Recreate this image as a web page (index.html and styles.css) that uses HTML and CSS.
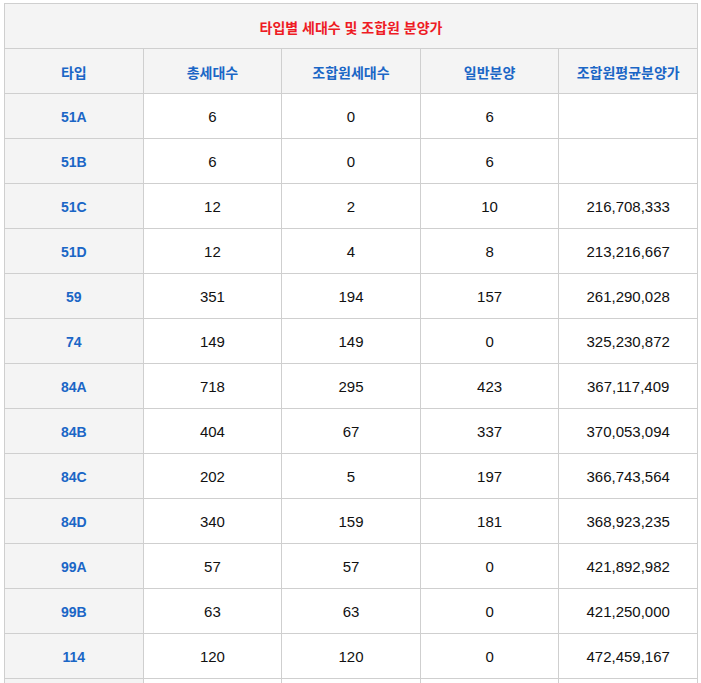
FILE: index.html
```html
<!DOCTYPE html>
<html lang="ko">
<head>
<meta charset="utf-8">
<link rel="stylesheet" href="styles.css">
</head>
<body>
<table class="tbl">
  <thead>
    <tr><th class="title" colspan="5">타입별 세대수 및 조합원 분양가</th></tr>
    <tr class="head">
      <th>타입</th><th>총세대수</th><th>조합원세대수</th><th>일반분양</th><th>조합원평균분양가</th>
    </tr>
  </thead>
  <tbody>
    <tr><th>51A</th><td>6</td><td>0</td><td>6</td><td></td></tr>
    <tr><th>51B</th><td>6</td><td>0</td><td>6</td><td></td></tr>
    <tr><th>51C</th><td>12</td><td>2</td><td>10</td><td>216,708,333</td></tr>
    <tr><th>51D</th><td>12</td><td>4</td><td>8</td><td>213,216,667</td></tr>
    <tr><th>59</th><td>351</td><td>194</td><td>157</td><td>261,290,028</td></tr>
    <tr><th>74</th><td>149</td><td>149</td><td>0</td><td>325,230,872</td></tr>
    <tr><th>84A</th><td>718</td><td>295</td><td>423</td><td>367,117,409</td></tr>
    <tr><th>84B</th><td>404</td><td>67</td><td>337</td><td>370,053,094</td></tr>
    <tr><th>84C</th><td>202</td><td>5</td><td>197</td><td>366,743,564</td></tr>
    <tr><th>84D</th><td>340</td><td>159</td><td>181</td><td>368,923,235</td></tr>
    <tr><th>99A</th><td>57</td><td>57</td><td>0</td><td>421,892,982</td></tr>
    <tr><th>99B</th><td>63</td><td>63</td><td>0</td><td>421,250,000</td></tr>
    <tr><th>114</th><td>120</td><td>120</td><td>0</td><td>472,459,167</td></tr>
    <tr><th></th><td></td><td></td><td></td><td></td></tr>
  </tbody>
</table>
</body>
</html>
```
FILE: styles.css
```css
html, body {
  margin: 0;
  padding: 0;
  background: #fff;
}
body {
  padding: 3px 4px 0 4px;
  font-family: "Liberation Sans", "Noto Sans CJK KR", sans-serif;
  font-size: 15px;
  color: #111;
}
.tbl {
  border-collapse: collapse;
  width: 694px;
  table-layout: fixed;
}
.tbl th, .tbl td {
  border: 1px solid #cfcfcf;
  text-align: center;
  vertical-align: middle;
  height: 43px;
  padding: 1px 0 0 0;
}
.tbl th {
  background: #f4f4f4;
  color: #1a66c6;
  font-weight: bold;
  font-size: 14px;
}
.tbl .title {
  color: #ee1b24;
  height: 43px;
  font-weight: bold;
}
.tbl td {
  background: #fff;
  color: #111;
}
```
